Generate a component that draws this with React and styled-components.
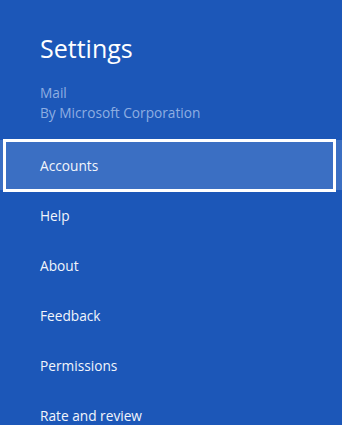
import React from 'react';
import styled, { createGlobalStyle } from 'styled-components';

const GlobalStyle = createGlobalStyle`
  html, body {
    margin: 0;
    padding: 0;
    background: #1c57b8;
    font-family: "Open Sans", "Noto Sans", sans-serif;
  }
`;

const items = ['Accounts', 'Help', 'About', 'Feedback', 'Permissions', 'Rate and review'];

const App = () => {
  return (
    <Pane>
      <GlobalStyle />
      <Header>
        <Title>Settings</Title>
        <AppName>Mail</AppName>
        <Publisher>By Microsoft Corporation</Publisher>
      </Header>
      <Menu>
        {items.map((label, i) => (
          <Item key={label} $focused={i === 0}>
            {label}
          </Item>
        ))}
      </Menu>
    </Pane>
  );
};

export default App;

const Pane = styled.div`
  width: 342px;
  height: 425px;
  overflow: hidden;
  background: #1c57b8;
  color: #ffffff;
`;

const Header = styled.div`
  padding: 31px 0 0 40px;
  display: flex;
  flex-direction: column;
`;

const Title = styled.h1`
  margin: 0 0 18px;
  font-size: 25px;
  font-weight: 400;
  line-height: 34px;
  color: #ffffff;
`;

const AppName = styled.div`
  font-size: 13.7px;
  line-height: 20px;
  color: #8eaee2;
`;

const Publisher = styled(AppName)``;

const Menu = styled.div`
  margin-top: 17px;
  display: flex;
  flex-direction: column;
`;

const Item = styled.div`
  position: relative;
  height: 50px;
  display: flex;
  align-items: center;
  padding-left: 40px;
  font-size: 13.7px;
  color: #f2f5fb;
  background: ${p => (p.$focused ? '#3b6fc3' : 'transparent')};

  ${p => p.$focused && `
    &::after {
      content: '';
      position: absolute;
      left: 3px;
      top: -1px;
      width: 333px;
      height: 53px;
      box-sizing: border-box;
      border: 3px solid #ffffff;
    }
  `}
`;
